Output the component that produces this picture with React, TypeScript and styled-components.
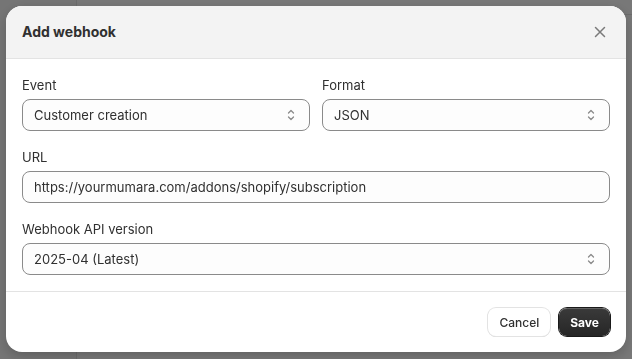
import React, { useState } from 'react';
import styled, { createGlobalStyle } from 'styled-components';

const GlobalStyle = createGlobalStyle`
  html, body {
    margin: 0;
    padding: 0;
    width: 100%;
    height: 100%;
    overflow: hidden;
  }
  body {
    font-family: Inter, "Noto Sans", "Liberation Sans", sans-serif;
    color: #303030;
    -webkit-font-smoothing: antialiased;
  }
  * { box-sizing: border-box; }
`;

export default function App() {
  const [event, setEvent] = useState("Customer creation");
  const [format, setFormat] = useState("JSON");
  const [url, setUrl] = useState("https://yourmumara.com/addons/shopify/subscription");
  const [version, setVersion] = useState("2025-04 (Latest)");

  return (
    <>
      <GlobalStyle />
      <Page>
        <Sidebar />
        <Main>
          <TopBar />
        </Main>
      </Page>
      <Backdrop>
        <Modal>
          <Header>
            <Title>Add webhook</Title>
            <CloseButton aria-label="Close">
              <svg width="20" height="20" viewBox="0 0 20 20" fill="none">
                <path d="M5.5 5.5l9 9M14.5 5.5l-9 9" stroke="#7a7a7a" strokeWidth="1.5" strokeLinecap="round" />
              </svg>
            </CloseButton>
          </Header>

          <Body>
            <Row>
              <Field>
                <Label>Event</Label>
                <Select value={event} onChange={setEvent} options={["Customer creation", "Customer update", "Order creation"]} />
              </Field>
              <Field>
                <Label>Format</Label>
                <Select value={format} onChange={setFormat} options={["JSON", "XML"]} />
              </Field>
            </Row>
            <Field>
              <Label>URL</Label>
              <TextInput value={url} onChange={(e) => setUrl(e.target.value)} />
            </Field>
            <Field>
              <Label>Webhook API version</Label>
              <Select value={version} onChange={setVersion} options={["2025-04 (Latest)", "2025-01", "2024-10"]} />
            </Field>
          </Body>

          <Footer>
            <SecondaryButton>Cancel</SecondaryButton>
            <PrimaryButton>Save</PrimaryButton>
          </Footer>
        </Modal>
      </Backdrop>
    </>
  );
}

function Select({ value, onChange, options }: { value: string; onChange: (v: string) => void; options: string[] }) {
  return (
    <SelectWrap>
      <NativeSelect value={value} onChange={(e) => onChange(e.target.value)}>
        {options.map((o) => (
          <option key={o} value={o}>{o}</option>
        ))}
      </NativeSelect>
      <Chevron viewBox="0 0 20 20" fill="none">
        <path d="M7.5 8l2.5-2.5L12.5 8" stroke="#8a8a8a" strokeWidth="1.3" strokeLinecap="round" strokeLinejoin="round" />
        <path d="M7.5 12l2.5 2.5L12.5 12" stroke="#8a8a8a" strokeWidth="1.3" strokeLinecap="round" strokeLinejoin="round" />
      </Chevron>
    </SelectWrap>
  );
}

const Page = styled.div`
  display: flex;
  width: 100vw;
  height: 100vh;
  background: #f1f1f1;
`;

const Sidebar = styled.div`
  width: 77px;
  border-right: 1px solid #d8d8d8;
  background: #ebebeb;
`;

const Main = styled.div`
  flex: 1;
`;

const TopBar = styled.div`
  height: 15px;
  border-bottom: 1px solid #d8d8d8;
`;

const Backdrop = styled.div`
  position: fixed;
  inset: 0;
  background: rgba(0, 0, 0, 0.5);
  display: flex;
  align-items: center;
  justify-content: center;
  padding-bottom: 1px;
`;

const Modal = styled.div`
  width: 620px;
  background: #ffffff;
  border-radius: 16px;
  overflow: hidden;
  box-shadow: 0 4px 12px rgba(0, 0, 0, 0.2);
  display: flex;
  flex-direction: column;
`;

const Header = styled.div`
  height: 53px;
  background: #f3f3f3;
  border-bottom: 1px solid #e3e3e3;
  display: flex;
  align-items: center;
  justify-content: space-between;
  padding: 0 12px 0 16px;
`;

const Title = styled.h2`
  margin: 0;
  font-size: 14px;
  font-weight: 650;
  color: #303030;
  padding-bottom: 1px;
`;

const CloseButton = styled.button`
  width: 28px;
  height: 28px;
  border: none;
  background: transparent;
  padding: 0;
  display: flex;
  align-items: center;
  justify-content: center;
  cursor: pointer;
  border-radius: 8px;
`;

const Body = styled.div`
  padding: 16px;
  display: flex;
  flex-direction: column;
  gap: 16px;
  border-bottom: 1px solid #e3e3e3;
`;

const Row = styled.div`
  display: grid;
  grid-template-columns: 1fr 1fr;
  gap: 12px;
`;

const Field = styled.div`
  display: flex;
  flex-direction: column;
  gap: 4px;
`;

const Label = styled.label`
  font-size: 13px;
  line-height: 20px;
  color: #303030;
`;

const SelectWrap = styled.div`
  position: relative;
  height: 32px;
`;

const NativeSelect = styled.select`
  appearance: none;
  width: 100%;
  height: 32px;
  border: 1px solid #8a8a8a;
  border-radius: 8px;
  background: #fdfdfd;
  font-family: inherit;
  font-size: 13px;
  color: #303030;
  padding: 0 32px 0 11px;
  outline: none;
`;

const Chevron = styled.svg`
  position: absolute;
  right: 9px;
  top: 6px;
  width: 20px;
  height: 20px;
  pointer-events: none;
`;

const TextInput = styled.input`
  width: 100%;
  height: 32px;
  border: 1px solid #8a8a8a;
  border-radius: 8px;
  background: #fdfdfd;
  font-family: inherit;
  font-size: 13px;
  color: #303030;
  padding: 0 11px;
  outline: none;
`;

const Footer = styled.div`
  display: flex;
  justify-content: flex-end;
  align-items: center;
  gap: 9px;
  padding: 16px;
`;

const SecondaryButton = styled.button`
  height: 28px;
  padding: 0 11px;
  border-radius: 8px;
  border: none;
  background: #ffffff;
  box-shadow: 0 0 0 1px #e3e3e3, 0 1px 0 #d4d4d4;
  font-family: inherit;
  font-size: 12px;
  font-weight: 550;
  color: #303030;
  cursor: pointer;
`;

const PrimaryButton = styled.button`
  height: 28px;
  padding: 0 11px;
  border-radius: 8px;
  border: none;
  background: linear-gradient(#3a3a3a, #262626);
  box-shadow: inset 0 1px 0 rgba(255, 255, 255, 0.2), 0 0 0 1px #1a1a1a;
  font-family: inherit;
  font-size: 12px;
  font-weight: 650;
  color: #ffffff;
  cursor: pointer;
`;
